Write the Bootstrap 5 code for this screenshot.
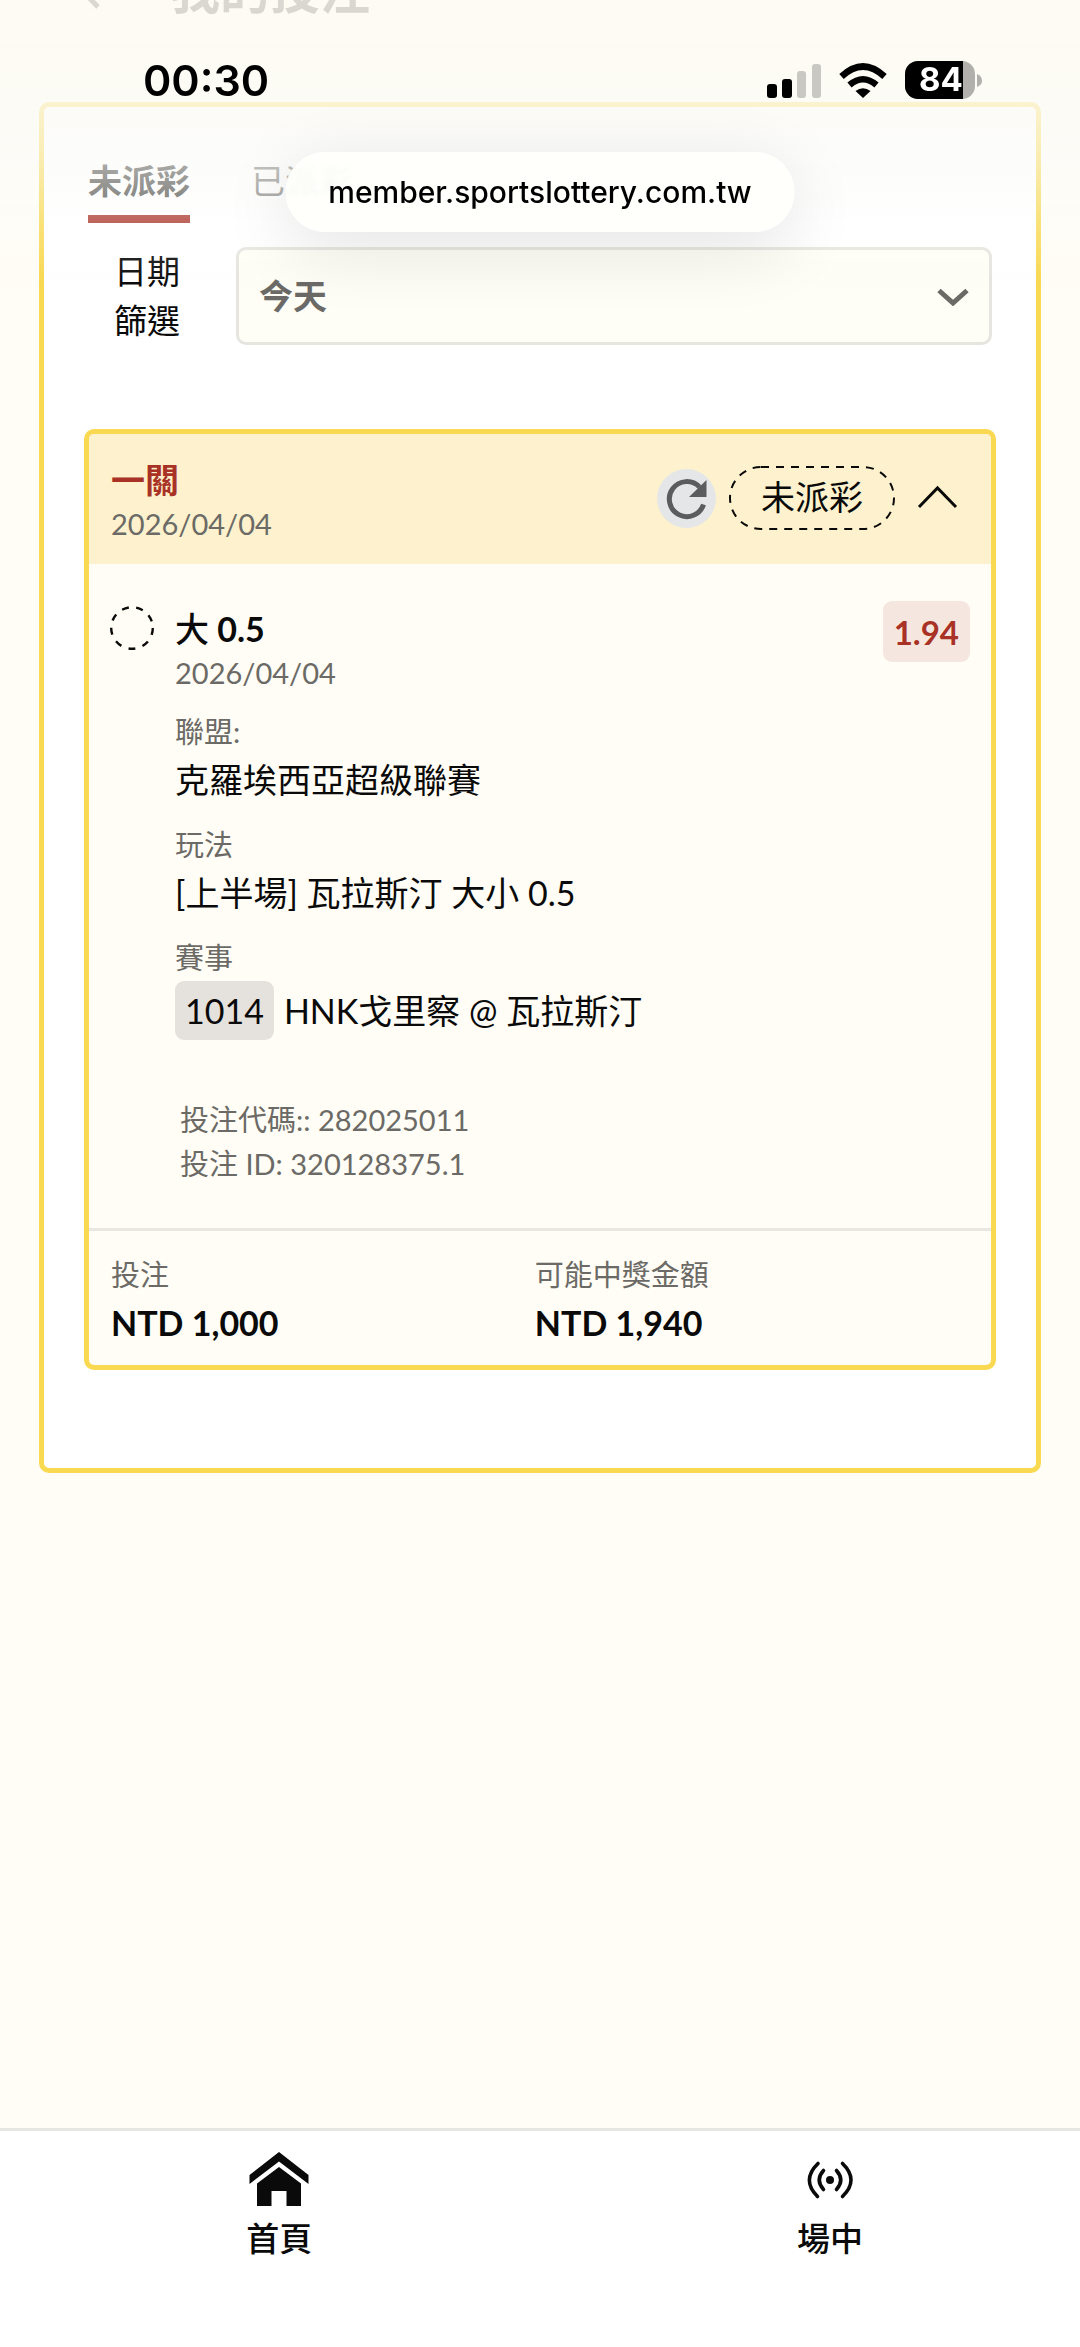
<!DOCTYPE html>
<html lang="zh-Hant">
<head>
<meta charset="utf-8">
<meta name="viewport" content="width=device-width, initial-scale=1">
<title>我的投注</title>
<link rel="stylesheet" href="https://cdn.jsdelivr.net/npm/bootstrap@5.3.0/dist/css/bootstrap.min.css">
<style>
:root { --gold: #f9d951; --cream: #fffdf5; --brick: #a93226; --muted: #6b6a66; --hair: #e6e5df; }
body { background: var(--cream); color: #0a0a0a; font-family: Lato, "Noto Sans CJK TC", sans-serif; font-size: 34px; line-height: 44px; }
button { color: inherit; }

/* page header, scrolled mostly out of view */
.page-head { height: 102px; overflow: hidden; padding-left: 68px; }
.page-head h1 { font-size: 50px; line-height: 60px; font-weight: 700; color: #3c3c38; margin: -40px 0 0; }
.back-btn { width: 48px; height: 48px; margin-top: -34px; margin-right: 54px; }

/* veil under the status bar */
.veil { height: 300px; pointer-events: none; background: linear-gradient(rgba(253,250,242,.82) 0, rgba(251,250,245,.76) 110px, rgba(250,250,248,.55) 165px, rgba(253,253,252,.26) 220px, rgba(255,255,255,0) 285px); }
.status-row { padding: 58px 97px 0 143px; font-family: Inter, sans-serif; color: #000; }
.clock { font-size: 43px; font-weight: 600; }
.url-pill { top: 152px; width: 509px; height: 80px; border-radius: 40px; background: rgba(255,255,252,.9); backdrop-filter: blur(2px); box-shadow: 0 16px 70px rgba(0,0,0,.11); font: 500 30px/80px Inter, sans-serif; color: #000; }

.bets-panel { margin: 0 39px; border: 5px solid var(--gold); border-radius: 10px; background: #fff; padding: 49px 40px 98px; }
.tab-row { padding-left: 4px; gap: 61px; }
.tab-btn { background: none; border: 0; border-bottom: 8px solid transparent; padding: 0 0 9px; line-height: 50px; color: #7c7c78; }
.tab-btn.on { border-bottom-color: var(--brick); color: #444440; font-weight: 700; }
.filter-row { margin-top: 24px; padding-right: 4px; }
.filter-row label { width: 152px; padding-left: 29px; padding-right: 55px; line-height: 49px; text-align: center; font-size: 33px; }
.day-select { appearance: none; height: 98px; font-size: 34px; font-weight: 700; color: var(--muted); border: 3px solid var(--hair); border-radius: 10px; background: #fffef6; padding: 0 20px; }
.select-arrow { right: 23px; top: 41px; pointer-events: none; }

.bet-card { margin-top: 84px; border: 5px solid var(--gold); border-radius: 10px; background: var(--cream); overflow: hidden; }
.bet-head { background: #fdf2cd; padding: 24px 31px 18px 22px; }
.bet-head h2 { font-size: 34px; line-height: 44px; font-weight: 700; color: var(--brick); margin: 0; }
.head-tools { padding-bottom: 8px; }
.dim { font-size: 29px; color: var(--muted); }
.refresh-btn { width: 59px; height: 59px; border: 0; border-radius: 50%; padding: 0; background: #e5e6e8; }
.status-chip { width: 168px; height: 66px; line-height: 64px; text-align: center; position: relative; margin: 0 20px 0 12px; }
.status-chip svg { left: 0; top: 0; }
.bet-body { padding: 37px 21px 42px 21px; }
.leg-icon { margin: 4px 21px 0 0; flex: none; }
.leg { padding-top: 6px; }
.leg-title { font-weight: 700; }
.leg-pick { font-weight: 500; }
.odds { background: #f5e7df; color: var(--brick); border-radius: 9px; font-size: 33px; font-weight: 700; height: 61px; line-height: 62px; padding: 0 11px; }
.leg dl { margin: 17px 0 0; }
.leg dt { font-weight: 400; font-size: 29px; line-height: 40px; color: var(--muted); }
.leg dd { line-height: 56px; margin: 0 0 17px; }
.leg dd.match { line-height: 59px; margin: 3px 0 0; }
.code-chip { background: #e5e2dd; border-radius: 9px; padding: 0 10px; margin-right: 10px; }
.ids { margin: 58px 0 0 5px; }
.bet-foot { border-top: 3px solid #e9e7e1; padding: 24px 22px 14px; }
.bet-foot dt { font-weight: 400; font-size: 29px; line-height: 40px; color: var(--muted); }
.bet-foot dd { font-weight: 700; line-height: 56px; margin: 0; }
.stake { width: 49.4%; }

.tab-bar { height: 219px; border-top: 3px solid #e6e6e4; background: #fff; padding: 20px 20.1% 0 22.8%; }
.tab-bar a { color: #0a0a0a; text-decoration: none; font-size: 33px; font-weight: 500; line-height: 48px; }
.tab-bar svg { width: 60px; height: 60px; margin-bottom: 3px; }
</style>
</head>
<body>
<div class="min-vh-100 d-flex flex-column">
  <header class="page-head d-flex align-items-start">
    <button type="button" class="back-btn btn p-0" aria-label="返回"><svg class="d-block" width="48" height="48" viewBox="0 0 48 48" fill="none" stroke="#3c3c38" stroke-width="5"><path d="M29 0 10 20 29 40"/></svg></button>
    <h1>我的投注</h1>
  </header>

  <main class="bets-panel">
    <div class="tab-row d-flex">
      <button type="button" class="tab-btn on">未派彩</button>
      <button type="button" class="tab-btn">已派彩</button>
    </div>

    <div class="filter-row d-flex">
      <label for="day" class="flex-shrink-0">日期篩選</label>
      <div class="position-relative flex-grow-1">
        <select id="day" class="day-select w-100"><option>今天</option></select>
        <svg class="select-arrow position-absolute" width="32" height="18" viewBox="0 0 32 18" fill="none" stroke="#6b6a66" stroke-width="5"><path d="M2 2.500 16 15 30 2.500"/></svg>
      </div>
    </div>

    <article class="bet-card">
      <div class="bet-head d-flex align-items-center">
        <div class="me-auto">
          <h2>一關</h2>
          <time class="dim d-block">2026/04/04</time>
        </div>
        <div class="head-tools d-flex align-items-center">
          <button type="button" class="refresh-btn" aria-label="重新整理"><svg class="d-block" width="59" height="59" viewBox="0 0 59 59"><path d="M46.500 35.500A17.500 17.500 0 1 1 42.500 18" fill="none" stroke="#5b5c5e" stroke-width="5"/><path d="M49.500 11V28H32z" fill="#5b5c5e"/></svg></button>
          <span class="status-chip"><svg class="position-absolute" width="168" height="66" viewBox="0 0 168 66" fill="none" stroke="#0a0a0a" stroke-width="2"><rect x="2" y="2" width="164" height="62" rx="31" stroke-dasharray="8 7"/></svg>未派彩</span>
          <button type="button" class="btn p-0" aria-label="收合"><svg class="d-block" width="42" height="26" viewBox="0 0 42 26" fill="none" stroke="#0a0a0a" stroke-width="3"><path d="M2 22 20.500 3 39 22"/></svg></button>
        </div>
      </div>

      <div class="bet-body d-flex align-items-start">
        <svg class="leg-icon" width="44" height="46" viewBox="0 0 44 46" fill="none" stroke="#0a0a0a" stroke-width="2.400"><circle cx="22" cy="23" r="20.800" stroke-dasharray="7 7.520"/></svg>
        <div class="leg flex-grow-1">
          <div class="leg-title"><span class="leg-pick">大</span> 0.5</div>
          <time class="dim d-block">2026/04/04</time>
          <dl>
            <dt>聯盟:</dt><dd>克羅埃西亞超級聯賽</dd>
            <dt>玩法</dt><dd>[上半場] 瓦拉斯汀 大小 0.5</dd>
            <dt>賽事</dt><dd class="match d-flex"><span class="code-chip">1014</span>HNK戈里察 @ 瓦拉斯汀</dd>
          </dl>
          <div class="ids dim"><div>投注代碼:: 282025011</div><div>投注 ID: 320128375.1</div></div>
        </div>
        <span class="odds">1.94</span>
      </div>

      <div class="bet-foot d-flex">
        <dl class="stake m-0"><dt>投注</dt><dd>NTD 1,000</dd></dl>
        <dl class="m-0"><dt>可能中獎金額</dt><dd>NTD 1,940</dd></dl>
      </div>
    </article>
  </main>

  <nav class="tab-bar mt-auto d-flex justify-content-between align-items-start">
    <a href="#" class="d-flex flex-column align-items-center"><svg viewBox="0 0 60 60" fill="#0a0a0a"><path d="M30 1 59.500 24V33L30 10.500.500 33V24z"/><path d="M30 16 52 32.500V55H37.500V40H22.500V55H8V32.500z"/></svg>首頁</a>
    <a href="#" class="d-flex flex-column align-items-center"><svg viewBox="0 0 60 60" fill="none" stroke="#0a0a0a" stroke-width="3.600" stroke-linecap="round"><circle cx="30" cy="29" r="4" fill="#0a0a0a" stroke="none"/><path d="M23.500 19.500Q15 29 23.500 38.500M36.500 19.500Q45 29 36.500 38.500M18 12.500Q1 29 17.500 45.500M42.500 12.500Q59.500 29 42.500 45.500"/></svg>場中</a>
  </nav>
</div>

<div class="veil position-fixed top-0 start-0 w-100">
  <div class="url-pill position-absolute start-50 translate-middle-x text-center">member.sportslottery.com.tw</div>
  <div class="status-row d-flex align-items-center position-relative">
    <span class="clock me-auto">00:30</span>
    <svg width="216" height="40" viewBox="0 0 216 40" role="img" aria-label="訊號、Wi-Fi、電量 84">
      <rect x="0" y="24" width="10" height="14" rx="3"/><rect x="15" y="19" width="10" height="19" rx="3"/>
      <g fill="#c9c8c3"><rect x="30" y="11" width="9" height="27" rx="3"/><rect x="45" y="4" width="9" height="34" rx="3"/></g>
      <g fill="none" stroke="#000" stroke-width="6.500"><path d="M74.500 16.500Q96 -3.500 117.500 16.500"/><path d="M82.500 25Q96 13.500 109.500 25"/></g>
      <path d="M88.500 31Q96 25.500 103.500 31L96 38z"/>
      <rect x="138" y="1" width="70" height="38" rx="13" fill="#b1b0ac"/>
      <path d="M151 1H196V39H151A13 13 0 0 1 138 26V14A13 13 0 0 1 151 1z"/>
      <path d="M210 14Q215 16 215 20.500T210 27z" fill="#b1b0ac"/>
      <text x="174" y="31" text-anchor="middle" font-family="Inter, sans-serif" font-weight="700" font-size="33" fill="#fff">84</text>
    </svg>
  </div>
</div>
<script src="https://cdn.jsdelivr.net/npm/bootstrap@5.3.0/dist/js/bootstrap.bundle.min.js"></script>
</body>
</html>
